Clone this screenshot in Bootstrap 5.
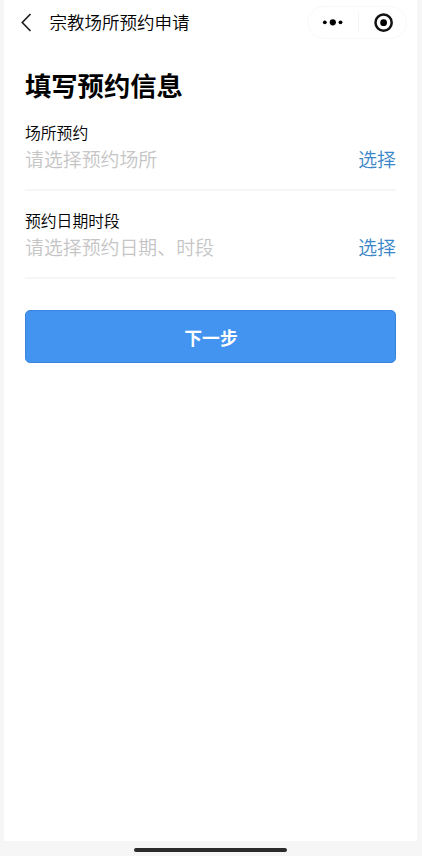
<!DOCTYPE html>
<html lang="zh-CN">
<head>
<meta charset="utf-8">
<meta name="viewport" content="width=device-width, initial-scale=1">
<title>宗教场所预约申请</title>
<link href="https://cdn.jsdelivr.net/npm/bootstrap@5.3.0/dist/css/bootstrap.min.css" rel="stylesheet">
<style>
body{font-family:"Noto Sans CJK SC",sans-serif;font-weight:350;background:#f6f6f6;color:#000;height:856px;overflow:hidden}
.screen{height:841px;margin:0 5px 0 4px}
.topbar{height:45px;padding:0 10px 0 16px}
.topbar-title{font-size:17.5px;line-height:26px;margin:-2px 0 0 15.5px}
.capsule{width:100px;height:33px;border:1px solid #f9f9f9;border-radius:17px;margin-top:-1px}
.capsule-split{width:1px;height:20px;background:#f4f4f4}
.form-area{padding:20px 21px 0}
.page-heading{font-size:26.3px;line-height:40px;margin:0 0 17px}
.field-line{height:69px;border-bottom:2px solid #f6f6f6}
.field-label{font-size:15.8px;line-height:22px}
.field-value{font-size:18.9px;line-height:28px;margin-top:1px}
.hint{color:#c5c5c5}
.pick{color:#3b87c8}
.field-one{margin-bottom:19px}
.field-two{margin-bottom:31px}
.btn-next{height:53px;background:#4393f1;border:1px solid #3b84dc;border-radius:5px;font-size:17.8px;line-height:1;padding:2px 0 0 1px}
.btn-next:hover{background:#3b84dc}
.home-strip{height:15px;padding-top:7px}
.home-handle{width:153px;height:4px;border-radius:2px;background:#2b2b2b;margin-right:2px}
</style>
</head>
<body>
<main class="screen bg-white">
  <header class="topbar d-flex align-items-center">
    <svg width="14" height="22" viewBox="0 0 14 22" fill="none" stroke="#222" stroke-width="1.7"><path d="M10.5 2 2.3 10.5l8.2 8.5"/></svg>
    <div class="topbar-title">宗教场所预约申请</div>
    <div class="capsule d-flex align-items-center justify-content-between ms-auto">
      <svg width="50" height="24" viewBox="0 0 50 24"><circle cx="16.8" cy="12.3" r="1.9"/><circle cx="24.8" cy="12.3" r="3.1"/><circle cx="32.5" cy="12.3" r="1.9"/></svg>
      <div class="capsule-split"></div>
      <svg width="47" height="24" viewBox="0 0 47 24"><circle cx="24.6" cy="12.7" r="8.1" fill="none" stroke="#111" stroke-width="2.5"/><circle cx="24.6" cy="12.7" r="3.4"/></svg>
    </div>
  </header>
  <section class="form-area">
    <h1 class="page-heading fw-bold">填写预约信息</h1>
    <div class="field-one field-line">
      <div class="field-label">场所预约</div>
      <div class="field-value d-flex justify-content-between"><span class="hint">请选择预约场所</span><span class="pick">选择</span></div>
    </div>
    <div class="field-two field-line">
      <div class="field-label">预约日期时段</div>
      <div class="field-value d-flex justify-content-between"><span class="hint">请选择预约日期、时段</span><span class="pick">选择</span></div>
    </div>
    <button type="button" class="btn btn-next w-100 text-white fw-bold d-flex align-items-center justify-content-center">下一步</button>
  </section>
</main>
<div class="home-strip d-flex justify-content-center"><div class="home-handle"></div></div>
<script src="https://cdn.jsdelivr.net/npm/bootstrap@5.3.0/dist/js/bootstrap.bundle.min.js"></script>
</body>
</html>
